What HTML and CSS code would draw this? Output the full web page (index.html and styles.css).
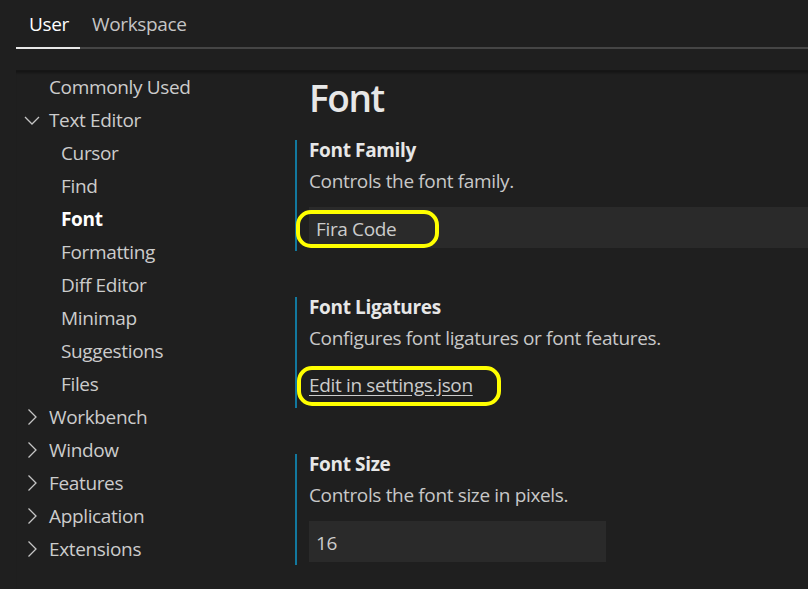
FILE: index.html
```html
<!DOCTYPE html>
<html lang="en">
<head>
<meta charset="utf-8">
<title>Settings</title>
<link rel="stylesheet" href="styles.css">
</head>
<body>
<div class="tabs">
  <div class="tab active">User</div>
  <div class="tab">Workspace</div>
</div>
<div class="main">
  <nav class="toc">
    <div class="row lvl0">Commonly Used</div>
    <div class="row group"><svg class="chev" viewBox="0 0 20 20"><path d="M4 7l7 7 7-7"/></svg>Text Editor</div>
    <div class="row lvl1">Cursor</div>
    <div class="row lvl1">Find</div>
    <div class="row lvl1 current">Font</div>
    <div class="row lvl1">Formatting</div>
    <div class="row lvl1">Diff Editor</div>
    <div class="row lvl1">Minimap</div>
    <div class="row lvl1">Suggestions</div>
    <div class="row lvl1">Files</div>
    <div class="row group"><svg class="chev" viewBox="0 0 20 20"><path d="M7.5 2.5l7.5 7.5-7.5 7.5"/></svg>Workbench</div>
    <div class="row group"><svg class="chev" viewBox="0 0 20 20"><path d="M7.5 2.5l7.5 7.5-7.5 7.5"/></svg>Window</div>
    <div class="row group"><svg class="chev" viewBox="0 0 20 20"><path d="M7.5 2.5l7.5 7.5-7.5 7.5"/></svg>Features</div>
    <div class="row group"><svg class="chev" viewBox="0 0 20 20"><path d="M7.5 2.5l7.5 7.5-7.5 7.5"/></svg>Application</div>
    <div class="row group"><svg class="chev" viewBox="0 0 20 20"><path d="M7.5 2.5l7.5 7.5-7.5 7.5"/></svg>Extensions</div>
  </nav>
  <section class="content">
    <h1 class="heading">Font</h1>
    <div class="setting">
      <div class="title">Font Family</div>
      <div class="desc">Controls the font family.</div>
      <div class="field wide">Fira Code</div>
      <div class="mark mark1"></div>
    </div>
    <div class="setting">
      <div class="title">Font Ligatures</div>
      <div class="desc">Configures font ligatures or font features.</div>
      <div class="linkrow"><a class="link" href="#">Edit in settings.json</a></div>
      <div class="mark mark2"></div>
    </div>
    <div class="setting">
      <div class="title">Font Size</div>
      <div class="desc">Controls the font size in pixels.</div>
      <div class="field narrow">16</div>
    </div>
  </section>
</div>
</body>
</html>
```

FILE: styles.css
```css
html, body {
  margin: 0;
  padding: 0;
  background: #1f1f1f;
  overflow: hidden;
}
body {
  width: 808px;
  height: 589px;
  font-family: "Open Sans", "Noto Sans", sans-serif;
  font-size: 19px;
  letter-spacing: -0.35px;
  color: #cccccc;
}
.tabs {
  display: flex;
  margin-left: 16px;
  height: 47px;
  border-bottom: 2px solid #454545;
}
.tab {
  padding: 2px 11px 0 12px;
  line-height: 45px;
  color: #c5c5c5;
}
.tab.active {
  padding-left: 13px;
  color: #ffffff;
  box-shadow: 0 2px 0 0 #e7e7e7;
}
.main {
  margin-top: 21px;
  margin-left: 16px;
  display: grid;
  grid-template-columns: 279px 1fr;
  box-shadow: inset 0 4px 2px -1px #161616;
  height: 519px;
}
.toc {
  padding-top: 0.5px;
}
.row {
  height: 33px;
  line-height: 33px;
  white-space: nowrap;
  display: flex;
  align-items: center;
  color: #cccccc;
}
.lvl0 { padding-left: 33px; }
.lvl1 { padding-left: 45px; }
.group { padding-left: 5px; }
.chev {
  width: 20px;
  height: 20px;
  margin-right: 8px;
  flex: none;
  fill: none;
  stroke: #c5c5c5;
  stroke-width: 1.3;
}
.current { color: #ffffff; font-weight: 700; }
.heading {
  margin: 0;
  padding: 5px 0 0 14px;
  height: 65px;
  font-size: 37px;
  line-height: 46px;
  font-weight: 600;
  letter-spacing: -1.4px;
  color: #e7e7e7;
}
.setting {
  position: relative;
  border-left: 2px solid #12789e;
  padding: 0 0 3px 12px;
  margin-bottom: 46px;
}
.title {
  line-height: 20px;
  font-weight: 700;
  color: #e7e7e7;
}
.desc {
  margin-top: 9px;
  line-height: 24px;
  color: #c8c8c8;
}
.field {
  margin-top: 14px;
  height: 41px;
  background: #2a2a2a;
  padding: 3px 0 0 7px;
  line-height: 38px;
  color: #cccccc;
  box-sizing: border-box;
}
.field.narrow { width: 297px; }
.linkrow {
  margin-top: 14px;
  height: 41px;
  display: flex;
  align-items: center;
}
.link {
  color: #cccccc;
  text-decoration: underline;
  text-underline-offset: 3px;
}
.mark {
  position: absolute;
  border: 4px solid #ffff00;
  border-radius: 15px;
  box-sizing: border-box;
}
.mark1 { left: -1px; top: 70px; width: 143px; height: 38px; }
.mark2 { left: 0; top: 69px; width: 204px; height: 40px; }
```
